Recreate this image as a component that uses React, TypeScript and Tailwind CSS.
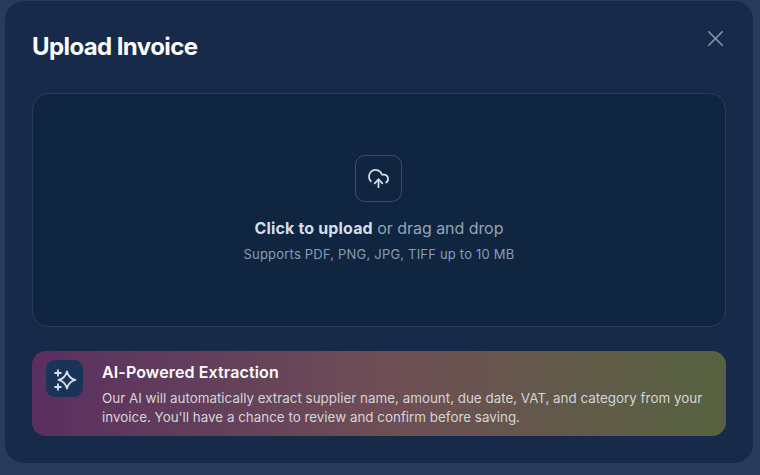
import React from 'react';
import { CloudUpload, X } from 'lucide-react';

const SparkIcon = () => (
  <svg width="26" height="26" viewBox="0 0 24 24" fill="none" stroke="currentColor" strokeWidth="1.7" strokeLinecap="round" strokeLinejoin="round">
    <path d="M13.8 5 Q15.4 11.3 21.6 12.9 Q15.4 14.5 13.8 20.8 Q12.2 14.5 6 12.9 Q12.2 11.3 13.8 5Z" />
    <path d="M5.5 3.9v5.2M2.9 6.5h5.2" />
    <path d="M5.5 16.8v5.2M2.9 19.4h5.2" />
  </svg>
);

export default function App() {
  return (
    <div className="w-[760px] h-[475px] overflow-hidden bg-[#293a5c] pl-[4px] font-['Inter',sans-serif]">
      <div className="w-[750px] h-[464px] rounded-[20px] bg-[#172a49] border border-[#2a3b5b] px-[27px] relative">
        <button className="absolute top-[24px] right-[24px] text-[#8092ad]">
          <X className="w-[27px] h-[27px]" strokeWidth={1.5} />
        </button>
        <h2 className="pt-[31px] text-[24px] leading-[30px] font-bold text-white tracking-[-0.6px]">Upload Invoice</h2>

        <div className="mt-[31px] h-[234px] w-[694px] rounded-[16px] border border-[#2a3c5c] bg-[#10253f] flex flex-col items-center">
          <div className="mt-[61px] -ml-px w-[47px] h-[47px] rounded-[10px] border border-[#3c4e6b] flex items-center justify-center text-[#d5deea]">
            <CloudUpload className="w-[23px] h-[23px]" strokeWidth={1.8} />
          </div>
          <p className="mt-[14px] text-[16px] leading-[24px] tracking-[-0.05px] text-[#94a3b8]">
            <span className="font-bold tracking-[0.15px] text-[#d4dde9]">Click to upload</span> or drag and drop
          </p>
          <p className="mt-[4px] text-[13px] leading-[20px] tracking-[0.2px] text-[#8a9bb3]">Supports PDF, PNG, JPG, TIFF up to 10 MB</p>
        </div>

        <div className="mt-[24px] h-[85px] w-[694px] rounded-[14px] bg-gradient-to-r from-[#5a2f60] via-[#6e4d55] to-[#56633f] flex px-[14px] pt-[9px]">
          <div className="w-[37px] h-[37px] rounded-[9px] bg-[#1a3358] flex items-center justify-center text-[#d5deea] shrink-0">
            <SparkIcon />
          </div>
          <div className="ml-[19px]">
            <p className="text-[16px] leading-[24px] font-semibold tracking-[0.13px] text-white">AI-Powered Extraction</p>
            <p className="mt-[5px] text-[13.4px] leading-[19px] text-[#d5d5d8]">
              Our AI will automatically extract supplier name, amount, due date, VAT, and category from your invoice. You'll have a chance to review and confirm before saving.
            </p>
          </div>
        </div>
      </div>
    </div>
  );
}
